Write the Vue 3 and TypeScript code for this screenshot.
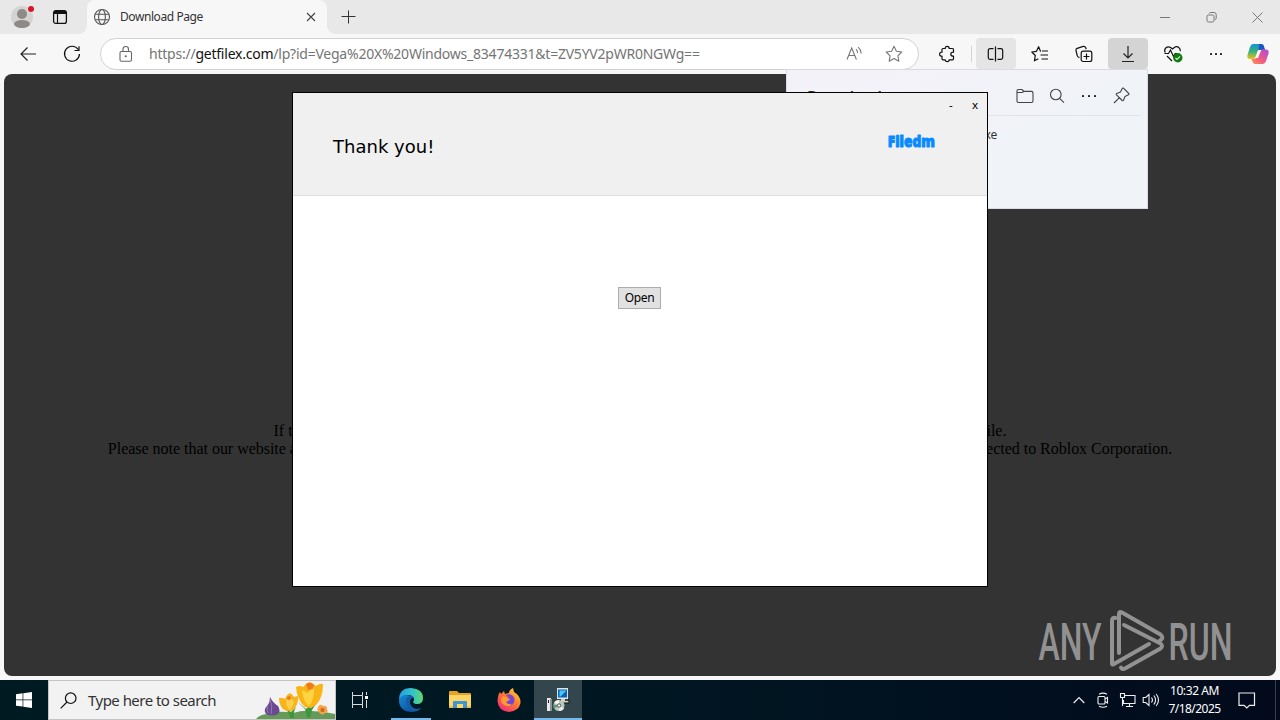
<script setup lang="ts">
import { ref } from 'vue'

const tabTitle = ref('Download Page')
const url = {
  scheme: 'https://',
  host: 'getfilex.com',
  path: '/lp?id=Vega%20X%20Windows_83474331&t=ZV5YV2pWR0NGWg==',
}
const clock = { time: '10:32 AM', date: '7/18/2025' }
</script>

<template>
  <div class="desktop">
    <header class="tabbar">
      <svg class="avatar" width="24" height="24" viewBox="0 0 24 24">
        <circle cx="11" cy="13" r="11" fill="#d5d3d2" />
        <circle cx="11" cy="10" r="5" fill="#8d8a88" />
        <ellipse cx="11" cy="20" rx="8" ry="4" fill="#8d8a88" />
        <circle cx="20" cy="5" r="3.6" fill="#e8e8e8" />
        <circle cx="20" cy="5" r="3" fill="#d9142b" />
      </svg>
      <svg class="workspace" width="16" height="16" viewBox="0 0 16 16" fill="none" stroke="#111">
        <rect x="1.6" y="1.6" width="12.8" height="12.8" rx="2.2" stroke-width="1.3" />
        <path d="M2 3.5h12" stroke-width="3" />
        <path d="M5.5 4v10" stroke-width="1.2" />
      </svg>
      <div class="tab">
        <svg width="18" height="18" viewBox="0 0 18 18" fill="none" stroke="#555" stroke-width="1.1">
          <circle cx="9" cy="9" r="7.5" />
          <ellipse cx="9" cy="9" rx="3.4" ry="7.5" />
          <path d="M2.3 6.3h13.4M2.3 11.7h13.4" />
        </svg>
        <span class="tab-title">{{ tabTitle }}</span>
        <svg class="tab-close" width="10" height="10" viewBox="0 0 10 10" stroke="#444" stroke-width="1.1">
          <path d="M1 1l8 8M9 1L1 9" />
        </svg>
      </div>
      <svg class="newtab" width="14" height="14" viewBox="0 0 14 14" stroke="#333">
        <path d="M7.500 .5v13M.5 6.500h14" />
      </svg>
      <div class="controls">
        <span><svg width="10" height="10" viewBox="0 0 10 10" stroke="#777"><path d="M0 5.5h10" /></svg></span>
        <span>
          <svg width="11" height="11" viewBox="0 0 11 11" fill="none" stroke="#777">
            <rect x="1" y="3" width="7" height="7" rx="1.5" />
            <path d="M3 1.5q.5-1 1.700-1H8q2.200 0 2.200 2.200V6q0 1.300-1 1.800" />
          </svg>
        </span>
        <span>
          <svg width="11" height="11" viewBox="0 0 11 11" stroke="#777"><path d="M.5.5l10 10M10.500.5l-10 10" /></svg>
        </span>
      </div>
    </header>

    <nav class="toolbar">
      <span class="cell back">
        <svg width="18" height="16" viewBox="0 0 18 16" fill="none" stroke="#222" stroke-width="1.2">
          <path d="M8.500 1.500L2 8l6.500 6.500M2 8H17" />
        </svg>
      </span>
      <span class="cell">
        <svg width="18" height="18" viewBox="0 0 18 18" fill="none" stroke="#111" stroke-width="1.200">
          <path d="M15.200 4.500A7.500 7.500 0 1 0 16.500 9M16 1.200v4.300h-4.500" />
        </svg>
      </span>
      <div class="address">
        <svg width="14" height="16" viewBox="0 0 14 16" fill="none" stroke="#666" stroke-width="1.100">
          <rect x="1" y="5.500" width="11.500" height="9.700" rx="1.500" />
          <path d="M4 5.500V3.300a2.750 2.750 0 0 1 5.500 0v2.200" />
          <circle cx="6.750" cy="10.300" r=".5" fill="#555" />
        </svg>
        <span class="url">{{ url.scheme }}<b>{{ url.host }}</b>{{ url.path }}</span>
        <svg class="read" width="18" height="16" viewBox="0 0 18 16" fill="none" stroke="#777" stroke-width="1.100">
          <path d="M1 13.500L5.700 2l4.700 11.500M2.700 9.500h6M10 3.200q1.600 1.600 1.600 3.800M12.200 1.200q3 2.800 3 6.300" />
        </svg>
        <svg class="star" width="18" height="18" viewBox="0 0 18 18" fill="none" stroke="#777" stroke-width="1.100" stroke-linejoin="round">
          <path d="M9 1.200l2.400 5 5.400.8-3.900 3.800.9 5.400L9 13.600l-4.800 2.600.9-5.400L1.200 7l5.400-.8z" />
        </svg>
      </div>
      <span class="cell ext">
        <svg width="18" height="18" viewBox="0 0 18 18" fill="none" stroke="#111" stroke-width="1.200" stroke-linejoin="round">
          <path d="M5 3.500h2.200q0-2.200 2-2.200t2 2.200H14.500q1 0 1 1v2.700q-2.700 0-2.700 2t2.700 2v2.600q0 1-1 1h-3.300q0 1.800-2 1.800t-2-1.800H5q-1 0-1-1v-2.600Q1.600 11.200 1.600 9.200T4 7.200V4.500q0-1 1-1z" />
        </svg>
      </span>
      <i class="divider"></i>
      <span class="cell split">
        <svg width="17" height="16" viewBox="0 0 17 16" fill="none" stroke="#111" stroke-width="1.200">
          <path d="M5.500 2.600H2.100Q.3 2.600.3 4.400v7.200q0 1.800 1.800 1.800h3.400M9.500 2.600h3.400q1.800 0 1.800 1.800v7.200q0 1.800-1.800 1.800H9.500M7.500 .5v15" />
        </svg>
      </span>
      <span class="cell">
        <svg width="18" height="18" viewBox="0 0 18 18" fill="none" stroke="#111" stroke-width="1.200" stroke-linejoin="round">
          <path d="M9.800 6.300H9.500L7.600 1.700 5.500 6.300l-4.700.7 3.500 3.500-.9 5.300 3.900-2M7.600 1.700l1.900 4.600M11 6h6M9.500 10H17M10.500 14H17" />
        </svg>
      </span>
      <span class="cell">
        <svg width="18" height="18" viewBox="0 0 18 18" fill="none" stroke="#111" stroke-width="1.200">
          <path d="M4.500 12.300H4Q2.500 12 2.200 10.500L1 5.500Q.700 4 2.200 3.400l6-2Q10 1 10.600 2.500l.6 1.800" />
          <rect x="6.200" y="6.200" width="10.600" height="10.300" rx="2" />
          <path d="M11.500 8.500v6M8.500 11.500h6" />
        </svg>
      </span>
      <span class="cell down">
        <svg width="16" height="18" viewBox="0 0 16 18" fill="none" stroke="#222" stroke-width="1.200">
          <path d="M8 1v12M3.500 8.500L8 13l4.500-4.500M2 16.500h12" />
        </svg>
      </span>
      <span class="cell health">
        <svg width="20" height="18" viewBox="0 0 20 18" fill="none" stroke="#111" stroke-width="1.200">
          <path d="M2.200 7.500Q.8 4.500 3 2.700t5 0L9.500 4 11 2.700q2.800-2 5 0 1.500 1.300 1.300 3.500M4 11l5 5M1.500 8.500h4l2-3.500 3 6.500 1.700-3h2" />
          <circle cx="14.800" cy="12.800" r="4.700" fill="#107c10" stroke="none" />
          <path d="M12.500 13l1.500 1.400 3-3" stroke="#d8f0d8" />
        </svg>
      </span>
      <span class="cell dots"><i></i><i></i><i></i></span>
      <svg class="copilot" width="22" height="20" viewBox="0 0 22 20">
        <defs>
          <linearGradient id="cpA" x1="0" y1="0" x2="0" y2="1">
            <stop offset="0" stop-color="#1690d8" /><stop offset=".5" stop-color="#35b27b" /><stop offset="1" stop-color="#f2c313" />
          </linearGradient>
          <linearGradient id="cpB" x1="1" y1="0" x2="0" y2="1">
            <stop offset="0" stop-color="#a64be0" /><stop offset=".55" stop-color="#ef5a86" /><stop offset="1" stop-color="#ff9350" />
          </linearGradient>
        </defs>
        <path d="M6 0h8q2 0 3 4l.5 2H13q-2 0-2.700 2l-1.500 4.500Q8 15 6 15H3q-3.500 0-2.500-4L3 3q1-3 3-3z" fill="url(#cpA)" />
        <path d="M12 0h2.500q2 0 2.800 3.300l.7 2.700h-4.500q-1.500 0-2 1z" fill="#1957c4" />
        <path d="M16 20H8q-2 0-3-4l-.4-1H7q2 0 2.700-2l1.700-5Q12 5.500 14 5.500h4.500q4 0 3 4L19 17q-1 3-3 3z" fill="url(#cpB)" />
        <path d="M11.300 6h2.900L11 14H8.300z" fill="#fafafa" />
      </svg>
    </nav>

    <main class="page">
      <p>If the download does not start automatically, please click the button below and wait a few seconds to fetch the file.</p>
      <p class="notice">Please note that our website and the software distributed through it are third-party products, are not affiliated with and are in no way connected to Roblox Corporation.</p>
    </main>

    <aside class="downloads">
      <div class="dl-head">
        <strong>Downloads</strong>
        <svg width="18" height="16" viewBox="0 0 18 16" fill="none" stroke="#444" stroke-width="1.100">
          <path d="M1 4V3q0-1.500 1.500-1.500H6L8 3.400h7.500Q17 3.400 17 5v8q0 1.500-1.500 1.500h-13Q1 14.500 1 13V4.500h5L8 3.400" />
        </svg>
        <svg width="16" height="16" viewBox="0 0 16 16" fill="none" stroke="#444" stroke-width="1.100">
          <circle cx="6.800" cy="6.500" r="5.300" /><path d="M10.600 10.300L15 14.700" />
        </svg>
        <span class="dots small"><i></i><i></i><i></i></span>
        <svg width="17" height="17" viewBox="0 0 17 17" fill="none" stroke="#444" stroke-width="1.100" stroke-linejoin="round">
          <path d="M10.500 1.200l5.300 5.300q.5.800-.4 1.300L12 9.500l-1.500 3.800q-.5.900-1.300.2L3.500 7.800q-.7-.8.200-1.300L7.500 5l1.700-3.400q.5-.9 1.300-.4zM6.200 10.800L1 16" />
        </svg>
      </div>
      <div class="dl-file">Setup.exe</div>
    </aside>

    <section class="installer">
      <div class="ins-head">
        <h1>Thank you!</h1>
        <svg class="brand" width="52" height="22" viewBox="0 0 52 22">
          <text x="1.800" y="16" textLength="47" lengthAdjust="spacingAndGlyphs">Filedm</text>
        </svg>
        <div class="ins-controls"><span>-</span><span>x</span></div>
      </div>
      <div class="ins-body"><button type="button">Open</button></div>
    </section>

    <svg class="watermark" width="200" height="66" viewBox="0 0 200 66">
      <g class="wm-text">
        <text x="2.500" y="51.500" textLength="63" lengthAdjust="spacingAndGlyphs">ANY</text>
        <text x="132.500" y="51.500" textLength="64" lengthAdjust="spacingAndGlyphs">RUN</text>
      </g>
      <g fill="none" stroke="#929292" stroke-width="4" stroke-linejoin="round" stroke-linecap="round">
        <path d="M79.500 10q-3.500-1-3.500 3v42.500q0 1.500 1.500.700L113 36" />
        <path d="M83 45V6q0-3 3-1.500l38.500 22q4 3.500-.5 6" />
        <path d="M88 17l36.500 18.500q3 2.500 0 5L89 60.500q-3 1.500-4-1" />
      </g>
    </svg>

    <footer class="taskbar">
      <span class="task">
        <svg width="16" height="16" viewBox="0 0 16 16" fill="#fff">
          <path d="M0 2.200l6.600-.9v6.200H0zM7.300 1.200L16 0v7.500H7.300zM0 8.300h6.600v6.300L0 13.700zM7.300 8.300H16V16l-8.700-1.200z" />
        </svg>
      </span>
      <div class="search">
        <svg width="17" height="17" viewBox="0 0 17 17" fill="none" stroke="#111" stroke-width="1.200">
          <circle cx="10.700" cy="6.200" r="5.300" /><path d="M7 10L.7 16.300" />
        </svg>
        <span>Type here to search</span>
        <svg class="flowers" width="79" height="38" viewBox="0 0 79 38">
          <path d="M0 38q4-5 13-5 10-4 24-1 10-3 18-2 12 0 24 3v5z" fill="#659a58" />
          <path d="M34 37q-1-7-6-10l7 4 5-5q-3 5-2 11zM51 36l-2-8-8-8 9 8 3-3 2 2 8-9-7 11-2 8z" fill="#3c963a" />
          <path d="M14 16q3 6 8 9 3 5 0 8-6 3-12 0-3-4 1-8 3-3 3-9z" fill="#6b4a91" />
          <path d="M14 18q3 8 1 15M12 25q-2 4 0 7" stroke="#9678b5" fill="none" />
          <path d="M23 17q3-1 6 1 2-5 5-6 3 2 4 4l4-1q1 9-6 15-5 1-9-2-4-4-4-11z" fill="#f7b51b" />
          <path d="M30 20q3-4 5-3 2 3 3 4-2 6-4 8-4-3-4-9z" fill="#ffd04b" />
          <circle cx="33" cy="17" r="2" fill="#ef7b20" />
          <path d="M40 6q4-2 7 0 3-4 7-5 4 2 6 4 4-3 7-2 0 14-7 21-5 4-11 2-8-7-9-20z" fill="#f9b415" />
          <path d="M46 9l6 3 6-8q1 14-5 21-6-5-7-16z" fill="#ffd443" />
          <path d="M50 3q4-3 8 1l-1 4-5 1z" fill="#ee7c1c" />
          <path d="M62 26q2-4 5-1 4-1 4 3 2 3-2 4-3 3-5 0-4-2-2-6z" fill="#f6a54c" />
          <circle cx="66.500" cy="29" r="2.200" fill="#d06d22" />
        </svg>
      </div>
      <span class="task view">
        <svg width="18" height="18" viewBox="0 0 18 18" fill="none" stroke="#ddd">
          <path d="M1.500 1v3.500h10V1M1.500 17v-3.500h10V17M1.500 4.500v9M11.500 4.500v9M15.500 1v3M15.500 9v8" />
          <path d="M14 6.500h3" stroke-width="3" stroke="#fff" />
        </svg>
      </span>
      <span class="task gap running">
        <svg width="24" height="24" viewBox="0 0 24 24">
          <defs>
            <linearGradient id="edA" x1="0" y1=".4" x2="1" y2=".4"><stop offset="0" stop-color="#269ee0" /><stop offset=".55" stop-color="#2ec3cd" /><stop offset="1" stop-color="#68d66c" /></linearGradient>
            <linearGradient id="edB" x1="0" y1="0" x2="1" y2="1"><stop offset="0" stop-color="#168bd6" /><stop offset="1" stop-color="#0c438e" /></linearGradient>
          </defs>
          <path d="M0 12Q0 0 12 0q12 1 12 10 0 6-6 6-4 0-4-2 1-2 1-3-1-4-6-4-6 0-9 5z" fill="url(#edA)" />
          <path d="M0 12q2-5 8-5 6 1 7 4-5 0-5 5 2 5 8 5 2 0 4-1-4 4-10 4Q0 23 0 12z" fill="url(#edB)" />
          <path d="M7 12q1-4 6-4 2 1 2 3-4 1-4 4 2 6 8 6l3-1q-3 4-8 3-7-3-7-11z" fill="#155ca9" />
          <path d="M12 11q2-2 3 0-1 2-1 3 1 3 7 2 2-1 2 1-4 4-8 2-4-2-4-5 0-2 1-3z" fill="#021b24" />
        </svg>
      </span>
      <span class="task">
        <svg width="22" height="20" viewBox="0 0 22 20">
          <path d="M0 2q0-1 1-1h7l2 2h11q1 0 1 1v3H0z" fill="#e8a21d" />
          <path d="M0 5h22v12q0 1-1 1H1q-1 0-1-1z" fill="#fdd567" />
          <path d="M4 18v-6q0-1 1-1h12q1 0 1 1v6h-4v-4H8v4z" fill="#3d96d4" />
          <path d="M0 16h4v2H1q-1 0-1-1zM18 16h4v2h-4z" fill="#f5bc45" />
        </svg>
      </span>
      <span class="task">
        <svg width="24" height="24" viewBox="0 0 24 24">
          <defs>
            <linearGradient id="fx" x1="1" y1="0" x2=".2" y2="1"><stop offset="0" stop-color="#ffe246" /><stop offset=".45" stop-color="#ff8429" /><stop offset="1" stop-color="#f4257d" /></linearGradient>
          </defs>
          <path d="M3 4l1 2 3-3 1 3q3-1 4-1 0-3 4-5l1 4q7 4 6.500 11Q22 23 12 24 1 23 .5 13 1 6 3 4z" fill="url(#fx)" />
          <path d="M9 7q4-2 7 1 3 4 0 8-4 4-9 1-3-4-1-6l3-1q3 0 3-1-2 0-3-2z" fill="#7745d4" />
          <path d="M5 9q2-2 5 1l3 1q-1 2-4 3 2 3 6 2-3 4-8 1-5-4-2-8z" fill="#ff9a2c" />
        </svg>
      </span>
      <span class="task active">
        <svg width="24" height="24" viewBox="0 0 24 24">
          <path d="M11 0h11v11H11z" fill="#dfe5e6" /><path d="M12 1.500h9v8H12z" fill="#0962ba" /><path d="M13.500 2.500h7l-6 6h-1z" fill="#4ac8f2" />
          <path d="M15 11h4v2h4v2h-9v-2h1z" fill="#d3d0bd" /><path d="M22 12h1v3h-6" fill="none" stroke="#111" />
          <path d="M1 10h4v13H1z" fill="#e8e8e8" /><path d="M4 11h2v12H4z" fill="#8c9495" /><path d="M2 12h1v3H2z" fill="#222" />
          <circle cx="13" cy="17.500" r="5.500" fill="#b9c9c2" /><path d="M13 17.500L8 14.500q2-3 5-2.500z" fill="#f5f7e9" /><path d="M13 17.500l5 3q-2 3-5 2z" fill="#e5efeb" /><path d="M13 17.500l-5 3q-1-2-.4-4z" fill="#589a80" />
          <circle cx="13" cy="17.500" r="1.700" fill="#f6f6f6" stroke="#555" />
        </svg>
      </span>
      <div class="tray">
        <span><svg width="12" height="8" viewBox="0 0 12 8" fill="none" stroke="#eee" stroke-width="1.200"><path d="M.7 7L6 1.500 11.300 7" /></svg></span>
        <span>
          <svg width="14" height="16" viewBox="0 0 14 16" fill="none" stroke="#eee" stroke-width="1.100">
            <rect x="2" y="4.500" width="7" height="7.500" rx="1" /><path d="M9 7l2.500-1.500v5.500L9 9.500M3 2.200q4-2.200 8 0M3 14.200q4 2 8 0" />
          </svg>
        </span>
        <span>
          <svg width="17" height="16" viewBox="0 0 17 16" fill="none" stroke="#eee" stroke-width="1.100">
            <path d="M6 3.500h10v8H4.500V8M10.500 11.500v3M7 14.500h7M1.500 1.500h4v4h-4zM3.500 5.500V14" />
          </svg>
        </span>
        <span>
          <svg width="18" height="16" viewBox="0 0 18 16" fill="none" stroke="#eee" stroke-width="1.100">
            <path d="M1.200 5.500h2.500L7 2.500v11l-3.300-3H1.200zM9.500 5.500q2 2.500 0 5M11.800 3.500q3.500 4.500 0 9M14.200 2q4.600 6 0 12" />
          </svg>
        </span>
        <div class="clock"><span>{{ clock.time }}</span><span class="date">{{ clock.date }}</span></div>
        <svg class="notify" width="18" height="17" viewBox="0 0 18 17" fill="none" stroke="#eee" stroke-width="1.200">
          <path d="M1 1h15.500v12.300h-5L8.800 16l-2.700-2.700H1z" />
        </svg>
        <i class="peek"></i>
      </div>
    </footer>
  </div>
</template>

<style>
html, body { margin: 0; overflow: hidden; }
</style>

<style scoped>
* { box-sizing: border-box; }
svg { display: block; flex: none; overflow: visible; }
.desktop { position: relative; display: flex; flex-direction: column; width: 1280px; height: 720px; overflow: hidden; background: #f7f7f7; font-family: "Noto Sans", "Open Sans", sans-serif; }
.tabbar { display: flex; align-items: center; height: 34px; flex: none; background: #e8e8e8; }
.avatar { margin: -3px 0 0 11px; }
.workspace { margin-left: 17px; }
.tab { position: relative; display: flex; align-items: center; align-self: stretch; width: 240px; margin-left: 19px; padding-left: 6px; background: #f7f7f7; border-radius: 8px 8px 0 0; }
.tab::before, .tab::after { content: ""; position: absolute; bottom: 0; width: 8px; height: 8px; }
.tab::before { left: -8px; background: radial-gradient(circle at 0 0, #e8e8e8 7.500px, #f7f7f7 8px); }
.tab::after { right: -8px; background: radial-gradient(circle at 100% 0, #e8e8e8 7.500px, #f7f7f7 8px); }
.tab-title { width: 110px; margin: -1px 0 0 9px; font-size: 12px; letter-spacing: -.42px; color: #333; white-space: nowrap; }
.tab-close { margin-left: 76px; }
.newtab { margin-left: 14px; }
.controls { display: flex; margin-left: auto; }
.controls span { display: flex; justify-content: center; width: 46px; }
.toolbar { display: flex; align-items: flex-start; height: 40px; flex: none; padding-top: 4px; }
.cell { display: flex; align-items: center; justify-content: center; flex: none; width: 40px; height: 31px; margin-right: 4px; }
.back { margin-left: 8px; }
.cell + .address { margin-left: 4px; }
.address { display: flex; align-items: center; flex: none; width: 819px; height: 32px; padding-left: 18px; border: 1px solid #d2d2d2; border-radius: 16px; background: #fff; }
.url { width: 690px; margin: -1px 0 0 16px; font-size: 14px; letter-spacing: -.23px; color: #757575; white-space: nowrap; }
.url b { font-weight: 400; color: #111; }
.read { margin-left: 7px; }
.star { margin-left: 21px; }
.ext { margin: 0 4px 0 8px; }
.divider { width: 1px; height: 16px; margin: 8px 4px 0 0; background: #d3d3d3; }
.split { margin-left: 0; border-radius: 4px; background: #e5e5e5; }
.down { border-radius: 4px; background: #d4d4d4; }
.health { padding-left: 2px; }
.dots { gap: 3px; }
.dots i { width: 2px; height: 2px; border-radius: 30%; background: #222; }
.copilot { margin: 6px 0 0 7px; }
.page { height: 602px; flex: none; margin: 0 4px 4px; padding-top: 348px; border-radius: 8px; background: #333; color: #000; font: 16px/18px "Liberation Serif", serif; text-align: center; white-space: nowrap; overflow: hidden; }
.page p { margin: 0; }
.page .notice { letter-spacing: -.021px; }
.downloads { position: absolute; left: 786px; top: 69px; width: 362px; height: 140px; border: 1px solid #d8dae4; background: linear-gradient(155deg, #f4f2f9 0, #f0f3f7 60%); color: #333; }
.dl-head { display: flex; align-items: center; height: 46px; margin: 0 6px 0 20px; padding-top: 6px; border-bottom: 1px solid #e1e4ea; }
.dl-head strong { width: 209px; font-size: 16px; line-height: 20px; font-weight: 600; letter-spacing: -.5px; padding-top: 2px; }
.dl-head svg:nth-of-type(2) { margin-left: 15px; }
.dl-head svg:nth-of-type(3) { margin-left: 17px; }
.small { display: flex; gap: 4px; width: 14px; margin-left: 17px; }
.dl-file { margin: 10px 150px 0 auto; font-size: 12px; line-height: 18px; text-align: right; letter-spacing: -.2px; }
.installer { position: absolute; left: 292px; top: 92px; display: flex; flex-direction: column; width: 696px; height: 495px; border: 1px solid #000; background: #fff; }
.ins-head { display: flex; height: 103px; flex: none; padding-left: 40px; border-bottom: 1px solid #dfdfdf; background: #f0f0f0; }
h1 { width: 553px; margin: 42px 0 0; font: 400 18px/24px "DejaVu Sans", sans-serif; letter-spacing: .02px; color: #000; }
.brand { margin-top: 38px; }
.brand text { font: 800 15.500px "Open Sans", sans-serif; fill: #078aff; stroke: #078aff; stroke-width: .9; stroke-linejoin: round; }
.ins-controls { display: flex; justify-content: space-between; width: 29px; height: 24px; margin-left: 11px; font-size: 11.500px; line-height: 24px; color: #000; }
.ins-body { display: flex; justify-content: center; padding-top: 91px; }
button { width: 43px; height: 22px; margin-right: 1px; padding: 0; border: 1px solid #adadad; background: #e1e1e1; font: 12px/18px "Noto Sans", sans-serif; letter-spacing: -.3px; color: #000; }
.watermark { position: absolute; left: 1036px; top: 608px; }
.wm-text text { font: 500 52px Roboto, sans-serif; fill: #919191; }
.taskbar { display: flex; height: 40px; flex: none; background: linear-gradient(90deg, #001a22, #001722 50%, #020a1c); }
.task { display: flex; align-items: center; justify-content: center; flex: none; width: 48px; margin-right: 1px; }
.task:first-child, .view { margin-right: 0; }
.gap { position: relative; margin-left: 3px; }
.running::after { content: ""; position: absolute; left: 4px; bottom: 0; width: 40px; height: 2px; background: #76b9ed; }
.active { border-bottom: 2px solid #76b9ed; padding-top: 2px; background: #33464d; }
.search { display: flex; align-items: center; flex: none; width: 288px; padding-left: 11px; border: 1px solid #c4c4c4; background: #f2f2f2; color: #333; font-size: 15px; }
.search span { width: 169px; margin-left: 11px; letter-spacing: -.53px; white-space: nowrap; }
.flowers { align-self: flex-end; }
.tray { display: flex; align-items: center; margin-left: auto; color: #fff; }
.tray > span { display: flex; justify-content: center; width: 24px; }
.clock { display: flex; flex-direction: column; align-items: center; width: 63px; font-size: 12px; line-height: 18px; letter-spacing: -.4px; white-space: nowrap; }
.date { letter-spacing: -.55px; }
.notify { margin-left: 12px; }
.peek { width: 1px; height: 40px; margin: 0 4px 0 19px; background: #39404b; }
</style>
